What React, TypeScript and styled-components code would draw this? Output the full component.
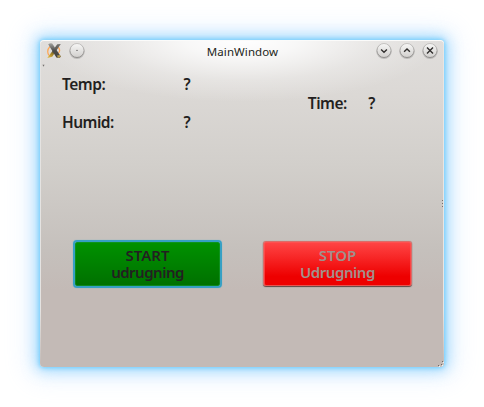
import React from "react";
import styled, { createGlobalStyle } from "styled-components";

const GlobalStyle = createGlobalStyle`
  * { box-sizing: border-box; }
  body { margin: 0; background: #fff; overflow: hidden; }
`;

const Desktop = styled.main`
  width: 484px;
  height: 407px;
  padding: 40px;
  background: #fff;
  font-family: "Noto Sans", "Open Sans", sans-serif;
  color: #231f20;
`;

const Window = styled.section`
  position: relative;
  display: flex;
  flex-direction: column;
  width: 404px;
  height: 327px;
  border-radius: 4px;
  background:
    radial-gradient(ellipse 200px 62px at 50% 0, #fff 0%, rgba(255, 255, 255, 0.78) 28%, rgba(255, 255, 255, 0.28) 66%, rgba(255, 255, 255, 0) 100%),
    linear-gradient(#e0dedc 0, #dcd9d6 48px, #d2cfcb 125px, #c5c0bc 210px, #c3bab6 250px, #c3bab6 100%);
  box-shadow:
    0 0 4px 1px rgba(82, 197, 252, 0.7),
    0 0 14px 4px rgba(106, 196, 251, 0.55),
    0 0 26px 9px rgba(170, 210, 255, 0.32);

  &::after {
    content: "";
    position: absolute;
    inset: 0;
    border-radius: 4px;
    box-shadow: inset 0 1px #fbfbfa, inset 1px 0 #e5e3e1, inset -1px 0 #e8e5e2;
    mask: linear-gradient(#000 82%, transparent);
    pointer-events: none;
  }
`;

const TitleBar = styled.header`
  display: grid;
  grid-template-columns: 90px 1fr 90px;
  height: 24px;
  padding: 2px 5.5px 0;
`;

const Controls = styled.div<{ $end?: boolean }>`
  display: flex;
  justify-content: ${(p) => (p.$end ? "flex-end" : "flex-start")};
  gap: ${(p) => (p.$end ? 5 : 4)}px;
`;

const Title = styled.h1`
  margin: 0;
  padding: 0 0 0 1px;
  font-size: 11.5px;
  font-weight: 400;
  line-height: 19px;
  letter-spacing: 0.08px;
  text-align: center;
`;

const TitleButton = styled.button`
  width: 18px;
  height: 18px;
  padding: 0;
  border: 0;
  background: none;

  svg { display: block; }
`;

const Readings = styled.div`
  display: flex;
  justify-content: space-between;
  align-items: center;
  padding: 1px 69px 0 22px;
`;

const ReadingGrid = styled.div<{ $label: number }>`
  display: grid;
  grid-template-columns: ${(p) => p.$label}px auto;
  grid-auto-rows: 38px;
  align-items: center;
`;

const Label = styled.span`
  font-size: 15.5px;
  font-weight: 600;
  line-height: 20px;
  letter-spacing: -0.5px;
  white-space: nowrap;
`;

const Actions = styled.div`
  display: flex;
  justify-content: space-between;
  margin-top: 99px;
  padding: 0 31px 0 33px;
`;

const ActionButton = styled.button<{ $tone: "start" | "stop" }>`
  position: relative;
  display: flex;
  flex-direction: column;
  align-items: center;
  width: ${(p) => (p.$tone === "start" ? 149 : 151)}px;
  height: 48px;
  padding: 5px 0 0;
  border: 2px solid ${(p) => (p.$tone === "start" ? "#36a0c4" : "transparent")};
  border-radius: 4px;
  color: ${(p) => (p.$tone === "start" ? "#231f20" : "#a0918c")};
  font-family: inherit;
  background: ${(p) =>
    p.$tone === "start"
      ? "linear-gradient(#009200, #007000) padding-box"
      : "linear-gradient(#ff4646 0%, #ee0000 78%, #ee0000 100%) padding-box"};
  box-shadow: ${(p) =>
    p.$tone === "start"
      ? "inset 0 0 0 1px rgba(20, 150, 45, 0.65), 0 0 1px #55aacb"
      : "inset 0 0 0 1px rgba(255, 85, 85, 0.7)"};

  &::before {
    content: "";
    display: ${(p) => (p.$tone === "stop" ? "block" : "none")};
    position: absolute;
    inset: -1px -1px 0;
    border: 1px solid rgba(222, 94, 90, 0.85);
    border-bottom-color: #e95450;
    border-radius: 3px;
    box-shadow: 0 1px 1px rgba(70, 40, 38, 0.8), 0 0 1px rgba(100, 80, 78, 0.4);
  }
`;

const ActionText = styled.span<{ $spacing?: number }>`
  font-size: 15px;
  font-weight: 600;
  line-height: 17px;
  letter-spacing: ${(p) => p.$spacing ?? 0}px;
`;

const SideGrip = styled.svg`
  position: absolute;
  right: 0;
  top: 159px;
`;

const CornerGrip = styled.svg`
  position: absolute;
  right: 0;
  bottom: 0;
`;

const MenuGrip = styled.svg`
  position: absolute;
  left: 1px;
  top: 23px;
`;

function AppIcon() {
  return (
    <svg width="18" height="18" viewBox="0 0 18 18" aria-label="X application">
      <defs>
        <linearGradient id="blade" x1="0" y1="0" x2="0" y2="1">
          <stop offset="0" stopColor="#a3a39f" />
          <stop offset="0.5" stopColor="#4b4a48" />
          <stop offset="1" stopColor="#45423c" />
        </linearGradient>
        <linearGradient id="brass" x1="0.8" y1="0" x2="0.2" y2="1">
          <stop offset="0" stopColor="#73726e" />
          <stop offset="0.55" stopColor="#53504a" />
          <stop offset="0.7" stopColor="#9c7c24" />
          <stop offset="1" stopColor="#ddb43d" />
        </linearGradient>
      </defs>
      <path d="M4 4.5Q0 8.5 3 13.5M12 5Q15 8 12.5 11" fill="none" stroke="#ffa653" strokeWidth="1.2" />
      <path d="M11.3 2.2L14.8 2 6.2 14.8 1.3 16Z" fill="url(#brass)" />
      <path d="M2.2 2.2Q4 .9 6.2 1.5L15 14.7 13 16 10.4 15.4Z" fill="url(#blade)" />
      <path d="M11 13.5L14 13 14.8 14.8 12 16Z" fill="#b79b4c" />
    </svg>
  );
}

const glyphs = {
  menu: "M8.5 8.4h1",
  minimize: "M6.1 7.5L9 10.2 11.9 7.5",
  maximize: "M6.1 9.7L9 7 11.9 9.7",
  close: "M6 5.6L12 11.4M12 5.6L6 11.4",
};

function WindowControl({ kind }: { kind: keyof typeof glyphs }) {
  return (
    <TitleButton aria-label={kind}>
      <svg width="18" height="18" viewBox="0 0 18 18">
        <defs>
          <linearGradient id={`face-${kind}`} x1="0" y1="0" x2="0" y2="1">
            <stop stopColor="#f7f7f6" />
            <stop offset="1" stopColor="#d1cfcd" />
          </linearGradient>
          <linearGradient id={`rim-${kind}`} x1="0" y1="0" x2="0" y2="1">
            <stop stopColor="#c2c0be" />
            <stop offset="1" stopColor="#8a8886" />
          </linearGradient>
        </defs>
        <circle cx="9" cy="9.2" r="7.7" fill="#777" opacity=".35" />
        <circle cx="9" cy="8.5" r="7" fill={`url(#face-${kind})`} stroke={`url(#rim-${kind})`} strokeWidth=".9" />
        <path d={glyphs[kind]} fill="none" stroke="#302e2d" strokeWidth={kind === "menu" ? 1 : 1.4} />
      </svg>
    </TitleButton>
  );
}

export default function App() {
  return (
    <>
      <GlobalStyle />
      <Desktop>
        <Window>
          <TitleBar>
            <Controls>
              <AppIcon />
              <WindowControl kind="menu" />
            </Controls>
            <Title>MainWindow</Title>
            <Controls $end>
              <WindowControl kind="minimize" />
              <WindowControl kind="maximize" />
              <WindowControl kind="close" />
            </Controls>
          </TitleBar>

          <Readings>
            <ReadingGrid $label={121.5}>
              <Label>Temp:</Label>
              <Label>?</Label>
              <Label>Humid:</Label>
              <Label>?</Label>
            </ReadingGrid>
            <ReadingGrid $label={60.5}>
              <Label>Time:</Label>
              <Label>?</Label>
            </ReadingGrid>
          </Readings>

          <Actions>
            <ActionButton $tone="start">
              <ActionText>START</ActionText>
              <ActionText $spacing={-0.5}>udrugning</ActionText>
            </ActionButton>
            <ActionButton $tone="stop" disabled>
              <ActionText>STOP</ActionText>
              <ActionText $spacing={-0.45}>Udrugning</ActionText>
            </ActionButton>
          </Actions>

          <MenuGrip width="5" height="5" viewBox="0 0 5 5">
            <path d="M2 2h1v1h-1z" fill="#777370" />
            <path d="M1 2h3M2.5 1v3" stroke="#777370" strokeWidth="1" opacity=".3" />
          </MenuGrip>
          <SideGrip width="3" height="9" viewBox="0 0 3 9">
            <path d="M1 1h1v1h-1zM1 4h1v1h-1zM1 7h1v1h-1z" fill="#756f6c" />
            <path d="M2 2h1v1h-1zM2 5h1v1h-1zM2 8h1v1h-1z" fill="#fff" />
          </SideGrip>
          <CornerGrip width="8" height="8" viewBox="0 0 8 8">
            <path d="M2 6h1v1h-1zM5 5h1v1h-1zM6 2h1v1h-1z" fill="#6f6865" />
            <path d="M3 7h1v1h-1zM6 6h1v1h-1zM7 3h1v1h-1z" fill="#f3efec" />
          </CornerGrip>
        </Window>
      </Desktop>
    </>
  );
}
